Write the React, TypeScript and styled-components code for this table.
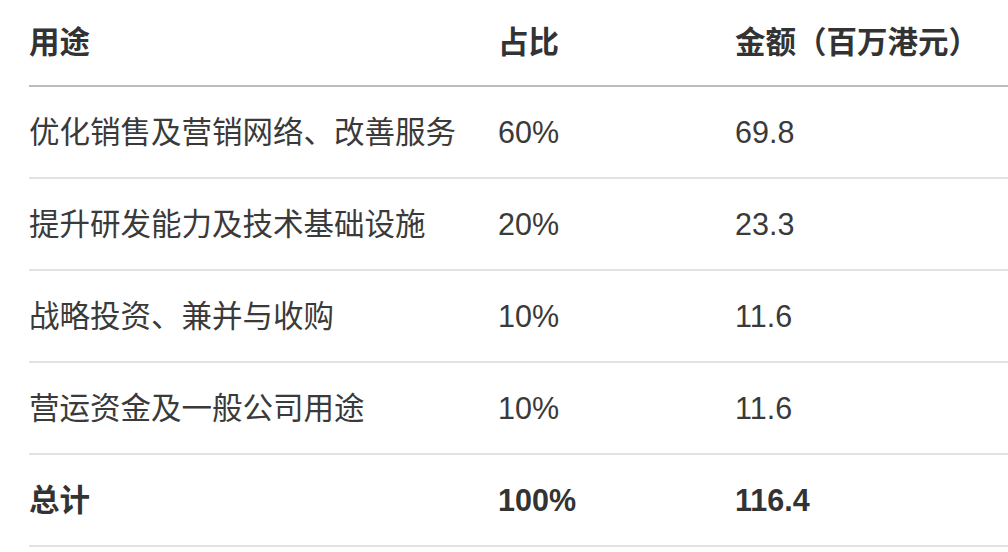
import React from "react";
import styled, { createGlobalStyle } from "styled-components";

const GlobalStyle = createGlobalStyle`
  html, body {
    margin: 0;
    padding: 0;
    background: #ffffff;
  }
  body {
    font-family: "Liberation Sans", "Noto Sans CJK SC", sans-serif;
    color: #333333;
    overflow: hidden;
  }
`;

const Page = styled.div`
  width: 1008px;
  height: 552px;
  padding-left: 29px;
  box-sizing: border-box;
`;

const Table = styled.div`
  display: grid;
  grid-template-columns: 469px 237px 1fr;
  width: 979px;
`;

const HeaderCell = styled.div`
  height: 87px;
  display: flex;
  align-items: center;
  box-sizing: border-box;
  border-bottom: 2px solid #bdbdbd;
  font-size: 30.5px;
  font-weight: 700;
  line-height: 1.2;
  color: #333333;
`;

const Cell = styled.div<{ $bold?: boolean }>`
  height: 92px;
  display: flex;
  align-items: center;
  box-sizing: border-box;
  border-bottom: 2px solid #e3e3e3;
  font-size: 30.5px;
  line-height: 1.2;
  font-weight: ${(p) => (p.$bold ? 700 : 400)};
  color: ${(p) => (p.$bold ? "#333333" : "#3a3a3a")};
`;

const rows = [
  ["优化销售及营销网络、改善服务", "60%", "69.8"],
  ["提升研发能力及技术基础设施", "20%", "23.3"],
  ["战略投资、兼并与收购", "10%", "11.6"],
  ["营运资金及一般公司用途", "10%", "11.6"],
];

export default function App() {
  return (
    <>
      <GlobalStyle />
      <Page>
        <Table>
          <HeaderCell>用途</HeaderCell>
          <HeaderCell>占比</HeaderCell>
          <HeaderCell>金额（百万港元）</HeaderCell>
          {rows.map((r) =>
            r.map((c, i) => <Cell key={r[0] + i}>{c}</Cell>)
          )}
          <Cell $bold>总计</Cell>
          <Cell $bold>100%</Cell>
          <Cell $bold>116.4</Cell>
        </Table>
      </Page>
    </>
  );
}
